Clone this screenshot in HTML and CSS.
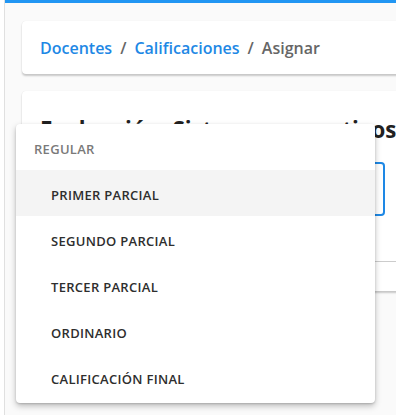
FILE: index.html
```html
<!DOCTYPE html>
<html lang="es">

<head>
    <meta charset="UTF-8">
    <meta name="viewport" content="width=device-width, initial-scale=1.0">
    <title>Asignar calificaciones</title>
    <link rel="stylesheet" href="styles.css">
</head>

<body>

    <div class="app">
        <aside class="rail"></aside>

        <main class="main">
            <div class="card breadcrumb">
                <a href="#">Docentes</a>
                <span class="sep">/</span>
                <a href="#">Calificaciones</a>
                <span class="sep">/</span>
                <span class="current">Asignar</span>
            </div>

            <div class="card form-card">
                <h2 class="title">Evaluación: Sistemas operativos</h2>
                <div class="select-box"></div>
                <div class="divider"></div>
            </div>
        </main>
    </div>

    <!-- Menú desplegable del select -->
    <div class="menu">
        <div class="menu-group">Regular</div>
        <div class="menu-item active">Primer parcial</div>
        <div class="menu-item">Segundo parcial</div>
        <div class="menu-item">Tercer parcial</div>
        <div class="menu-item">Ordinario</div>
        <div class="menu-item">Calificación final</div>
    </div>

</body>

</html>
```

FILE: styles.css
```css
/* Estilos generales */
body {
    font-family: 'Open Sans', 'Noto Sans', sans-serif;
    background-color: #fafafa;
    margin: 0;
    padding: 0;
    height: 100vh;
    overflow: hidden;
}

.app {
    display: flex;
    height: 100%;
}

.rail {
    width: 4px;
    background-color: #ffffff;
    border-right: 1px solid #e0e0e0;
    flex-shrink: 0;
}

.main {
    flex: 1;
    border-top: 3px solid #2196f3;
    padding: 18px 0 0 17px;
    overflow: hidden;
}

.card {
    background-color: #ffffff;
    border-radius: 4px;
    margin-right: -40px;
    box-shadow: 0 2px 2px rgba(0, 0, 0, 0.2), 0 0 1px rgba(0, 0, 0, 0.1);
}

/* Migas de pan */
.breadcrumb {
    height: 53px;
    display: flex;
    align-items: center;
    gap: 8px;
    padding: 0 18px;
    font-size: 16px;
    font-weight: 600;
    box-sizing: border-box;
}

.breadcrumb a {
    color: #1e88e5;
    text-decoration: none;
}

.breadcrumb .sep,
.breadcrumb .current {
    color: #666666;
}

/* Formulario */
.form-card {
    margin-top: 17px;
    padding: 24px 0 0 18px;
    height: 200px;
    box-sizing: border-box;
}

.title {
    margin: 0;
    font-size: 22.3px;
    line-height: 30px;
    font-weight: 700;
    color: #212121;
    white-space: nowrap;
}

.select-box {
    margin-top: 17px;
    width: 341px;
    height: 50px;
    border: 2px solid #1e88e5;
    border-radius: 4px;
}

.divider {
    margin-top: 45px;
    border-top: 1px solid #cccccc;
}

/* Menú desplegable */
.menu {
    position: absolute;
    top: 124px;
    left: 16px;
    width: 359px;
    padding: 0 0 3px;
    background-color: #ffffff;
    border-radius: 4px;
    box-shadow: 0 3px 6px rgba(0, 0, 0, 0.25), 0 1px 2px rgba(0, 0, 0, 0.15);
}

.menu-group,
.menu-item {
    height: 46px;
    display: flex;
    align-items: center;
    padding-top: 3px;
    box-sizing: border-box;
    font-size: 13px;
    font-weight: 600;
    letter-spacing: 0.3px;
    text-transform: uppercase;
}

.menu-group {
    padding-left: 18px;
    color: #7a7a7a;
}

.menu-item {
    padding-left: 35px;
    color: #2e2e2e;
}

.menu-item.active {
    background-color: #f4f4f4;
}
```
